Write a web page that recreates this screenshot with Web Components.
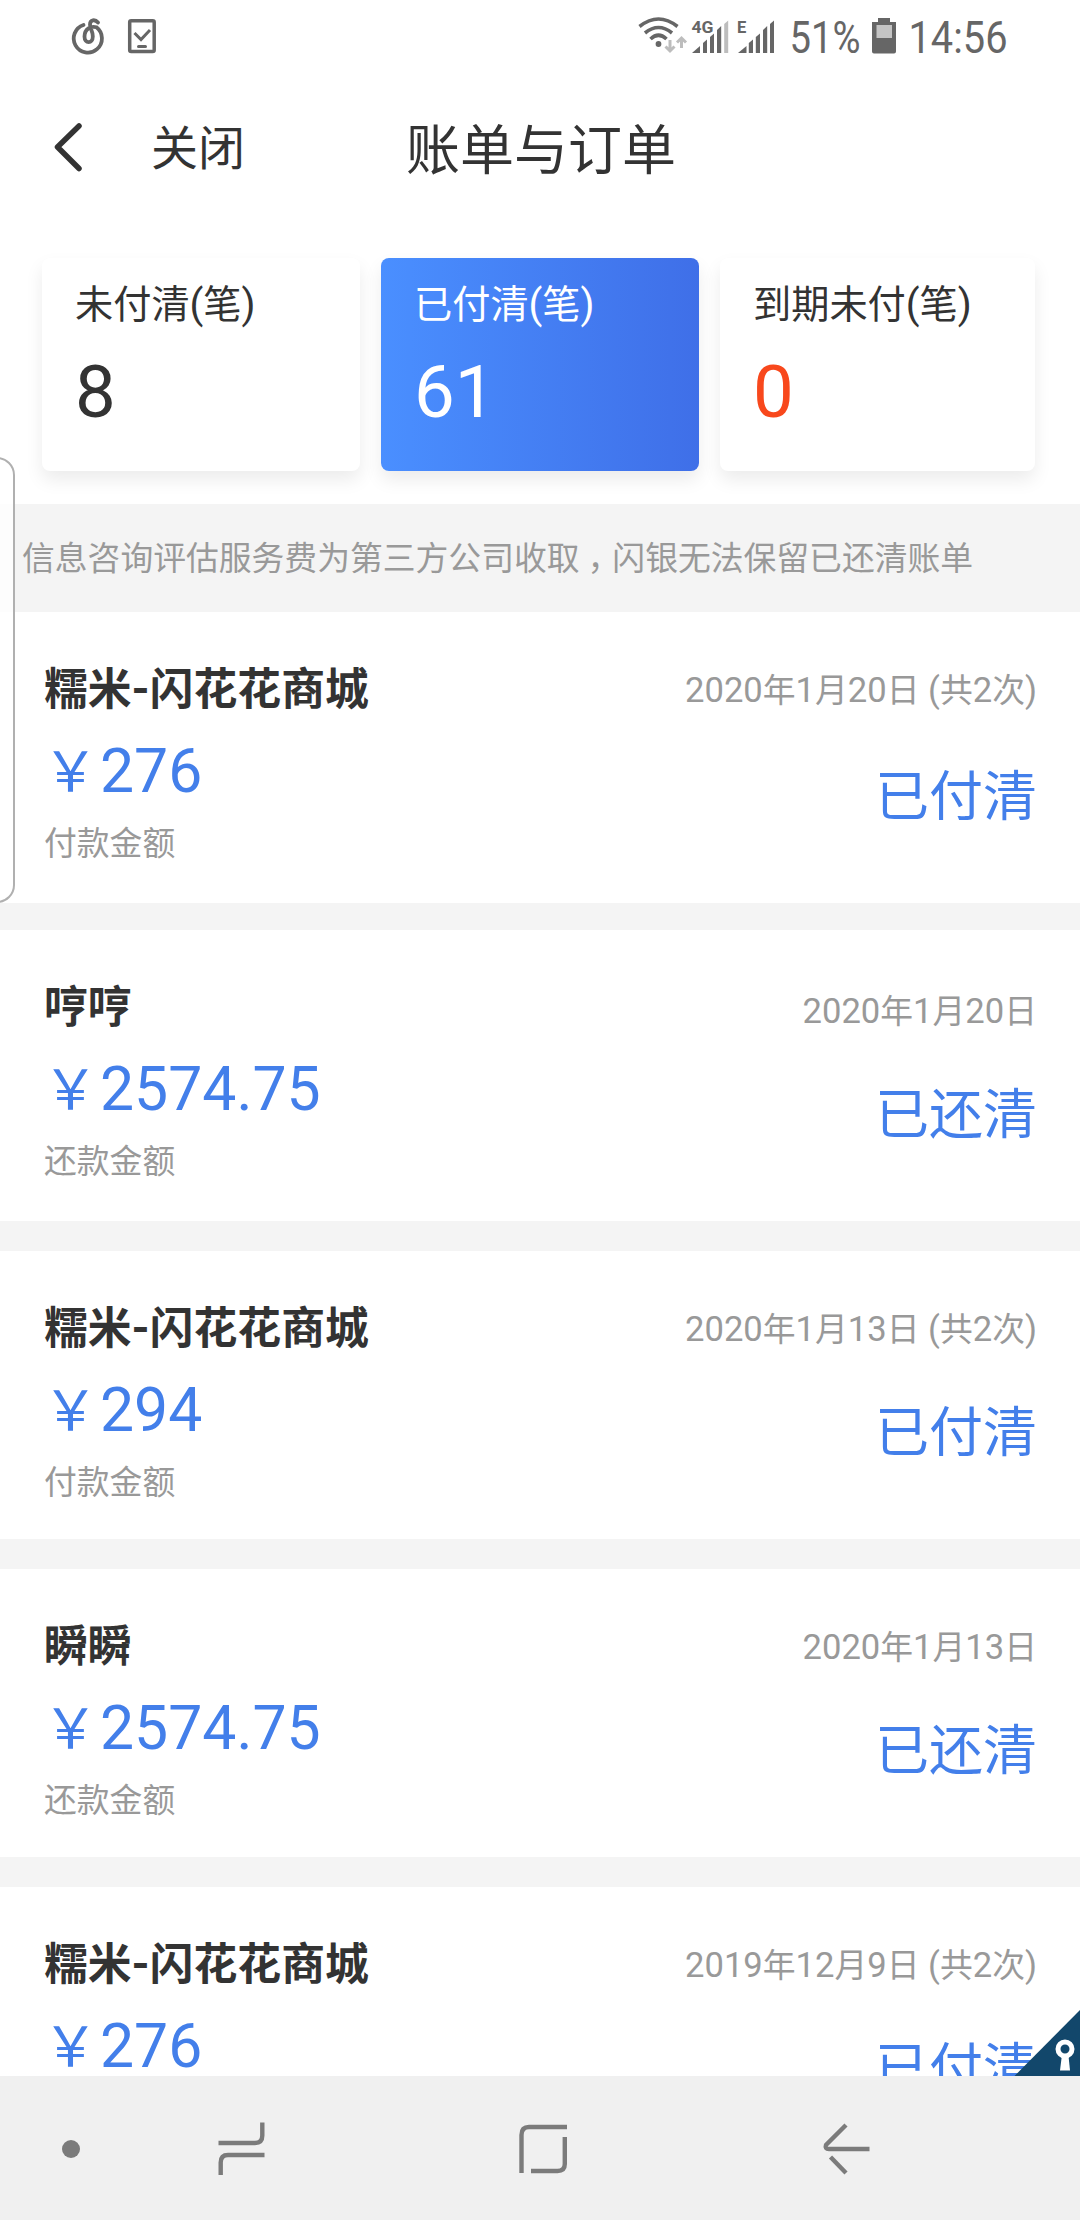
<!DOCTYPE html>
<html lang="zh-CN">
<head>
<meta charset="utf-8">
<title>账单与订单</title>
<style>
html,body{margin:0;padding:0;background:#fff}
body{width:1080px;height:2220px;overflow:hidden;font-family:Roboto,"Noto Sans CJK SC",sans-serif;color:#333}
</style>
</head>
<body>
<bill-app></bill-app>
<script>
const define=(name,html)=>customElements.define(name,class extends HTMLElement{
  connectedCallback(){
    if(this.shadowRoot)return;
    const t=document.createElement('template');
    t.innerHTML=typeof html==='function'?html(this):html;
    this.attachShadow({mode:'open'}).appendChild(t.content.cloneNode(true));
  }
});
/* Han runs are set slightly smaller than the Latin text around them. */
const mix=s=>s.replace(/[\u3000-\u9fff\uff0c]+/g,m=>`<span class="h">${m}</span>`);
const H='.h{font-size:.948em;line-height:0}';

define('status-bar',`<style>
:host{display:flex;justify-content:space-between;height:76px;padding:0 40px 0 60px;color:#666}
svg{display:block}text{font-family:Roboto,sans-serif;fill:#666}
</style>
<svg width="110" height="76" viewBox="60 0 110 76" fill="none" stroke="#666">
 <path d="M83.500 25A14.100 14.100 0 1 0 96.500 27.300C91 25.500 84.500 29 84.500 36.500C84.500 44 92.800 44 92.800 36.500C92.800 31 90 28.500 90 24.500C90 19.500 95 19 98 22.500" stroke-width="3.800" stroke-linecap="round"/>
 <rect x="129.700" y="20.700" width="24.500" height="30.800" rx="1.500" stroke-width="3.500"/>
 <path d="M134.500 33L141 39.500L150 30" stroke-width="3"/><path d="M138.500 46.500H145.500" stroke-width="3" stroke-linecap="round"/>
</svg>
<svg width="420" height="76" viewBox="620 0 420 76">
 <g fill="none" stroke="#666" stroke-width="3.600"><path d="M639.500 26.500Q658.500 11.500 677.500 26.500"/><path d="M645 33Q658.500 22 672 33"/><path d="M650.500 39Q658.500 31.500 666.500 39"/></g>
 <circle cx="658.500" cy="44" r="2.900" fill="#666"/>
 <g fill="none" stroke="#bdbdbd" stroke-width="3"><path d="M670 40V50M665.500 46.500L670 51L674.500 46.500"/><path d="M681.500 48V38.500M677 42.500L681.500 38L686 42.500"/></g>
 <g fill="#666"><path d="M692 53L700 46V53Z"/><path d="M703 53V43L707 39.500V53Z"/><path d="M710 53V37L714 33.500V53Z"/><path d="M717 53V30L721.200 26V53Z"/></g>
 <path d="M724.200 53V24L728.200 20.500V53Z" fill="#bdbdbd"/>
 <g fill="#666"><path d="M738 53L746.500 46V53Z"/><path d="M748.800 53V43L753 39.500V53Z"/><path d="M755.800 53V37L760 33.500V53Z"/><path d="M763 53V30L767.200 26V53Z"/><path d="M770 53V24L774 20.500V53Z"/></g>
 <text x="691.500" y="33" font-size="16.500" font-weight="700" textLength="22" lengthAdjust="spacingAndGlyphs" stroke="#fff" stroke-width="2" paint-order="stroke">4G</text>
 <text x="737" y="33" font-size="16.500" font-weight="700">E</text>
 <text x="789.500" y="53" font-size="45" textLength="71" lengthAdjust="spacingAndGlyphs">51%</text>
 <path d="M878 18H890V22H896V51.500Q896 53.500 894 53.500H874Q872 53.500 872 51.500V22H878Z" fill="#666"/>
 <rect x="876.500" y="25" width="15.500" height="13" fill="#c4c4c4"/>
 <text x="908.500" y="53" font-size="45" textLength="99" lengthAdjust="spacingAndGlyphs">14:56</text>
</svg>`);

define('title-bar',`<style>
:host{display:grid;grid-template-columns:151px 1fr 152px;align-items:center;box-sizing:border-box;height:144px;padding-top:7px}
svg{display:block;margin:-9px 0 0 50px}
.close{font-size:47px;line-height:68px}
.row{display:grid;grid-template-columns:255px 1fr;align-items:start;grid-column:2/4}
.t{font-size:54px;line-height:73px;white-space:nowrap}
</style>
<svg width="36" height="60" viewBox="50 117 36 60" fill="none" stroke="#333" stroke-width="5.500" stroke-linecap="round" stroke-linejoin="round"><path d="M79 126L57.500 147L79 168.500"/></svg>
<div class="row"><span class="close"><slot name="close"></slot></span><span class="t"><slot></slot></span></div>`);

define('count-card',el=>`<style>${H}
:host{display:block;box-sizing:border-box;height:213px;padding:22.500px 0 0 33px;border-radius:8px;background:#fff;box-shadow:0 9px 18px rgba(0,0,0,.08)}
:host([active]){background:linear-gradient(90deg,#4a8fff,#3f6fe8);color:#fff}
:host([alert]) .n{color:#f8481c}
.l{font-size:40.300px;line-height:48px;white-space:nowrap}.n{font-size:72.500px;line-height:80px;margin-top:24.500px}
</style><div class="l">${mix(el.getAttribute('label'))}</div><div class="n"><slot></slot></div>`);

define('count-row',`<style>
:host{display:grid;grid-template-columns:318px 318px 315px;column-gap:21px;padding:38px 45px 33px 42px}
</style><slot></slot>`);

define('notice-bar',`<style>
:host{display:block;height:108px;background:#f4f4f4;color:#999;font-size:32.800px;line-height:110px;padding-left:22px;white-space:nowrap}
.c{margin:0 -8px 0 8px}
</style>信息咨询评估服务费为第三方公司收取<span class="c">，</span>闪银无法保留已还清账单`);

define('bill-item',el=>`<style>${H}
:host{display:flex;justify-content:space-between;box-sizing:border-box;height:291px;padding:50px 43px 0 44px;background:#fff}
.t{font-size:46.200px;line-height:54px;font-weight:700}
.p{font-size:60.700px;line-height:72px;margin-top:20px;color:#437fea}.y{font-size:55px;line-height:0;margin:0 2px 0 -1px;vertical-align:1px}
.s{font-size:34.600px;line-height:40px;margin-top:14.500px;color:#999}
.r{text-align:right}.d{font-size:34.600px;line-height:54px;margin-top:var(--d,1px);color:#999}
.st{font-size:57px;line-height:60px;margin:var(--gap,47px) 0 0 0;color:#437fea}
</style>
<div><div class="t">${mix(el.getAttribute('name'))}</div><div class="p"><span class="y">￥</span>${el.getAttribute('amount')}</div>${el.hasAttribute('kind')?`<div class="s">${mix(el.getAttribute('kind'))}</div>`:''}</div>
<div class="r"><div class="d">${mix(el.getAttribute('date'))}</div><div class="st">${mix(el.getAttribute('state'))}</div></div>`);

define('bill-list',`<style>
:host{display:flex;flex-direction:column;gap:30px;background:#f4f4f4;height:1464px;overflow:hidden}
::slotted(*){flex:none}
::slotted(:first-child){margin-bottom:-3px}
::slotted(:nth-child(n+3)){height:288px!important}
</style><slot></slot>`);

define('nav-bar',`<style>:host{display:block;height:144px;background:#f0f0f0}svg{display:block}</style>
<svg width="1080" height="144" viewBox="0 2076 1080 144" fill="none" stroke="#7b7b7b" stroke-width="4.400">
<circle cx="71" cy="2149" r="9" fill="#7b7b7b" stroke="none"/>
<path d="M218.500 2143H255Q262.300 2143 262.300 2135.500V2122.500"/><path d="M264.500 2155H228Q220.700 2155 220.700 2162.500V2175"/>
<path d="M521.500 2173V2135Q521.500 2127 529 2127H567"/><path d="M564.800 2137V2164Q564.800 2171 557.500 2171H531"/>
<path d="M846 2125L826 2145Q824.500 2149 829 2149H869.500"/><path d="M830.500 2157L846 2173"/></svg>`);

define('edge-panel',`<style>:host{position:absolute;left:-22px;top:457px;width:33px;height:442px;border:2px solid #b0b0b0;border-radius:18px;background:rgba(255,255,255,.78)}</style>`);
define('corner-badge',`<style>:host{position:absolute;right:0;top:2010px;width:66px;height:66px}svg{display:block}</style>
<svg width="66" height="66" viewBox="1014 2010 66 66"><path d="M1080 2010V2076H1014.500Z" fill="#12476b"/><path d="M1061.800 2056H1068.500L1070 2070.500H1060Z" fill="#fff"/><circle cx="1065" cy="2049" r="7" fill="#12476b" stroke="#fff" stroke-width="5"/></svg>`);

define('bill-app',`<style>:host{display:block;position:relative;width:1080px;height:2220px;overflow:hidden;background:#fff}</style>
<status-bar></status-bar>
<title-bar><span slot="close">关闭</span>账单与订单</title-bar>
<count-row><count-card label="未付清(笔)">8</count-card><count-card label="已付清(笔)" active>61</count-card><count-card label="到期未付(笔)" alert>0</count-card></count-row>
<notice-bar></notice-bar>
<bill-list>
<bill-item style="--gap:50px" name="糯米-闪花花商城" amount="276" kind="付款金额" date="2020年1月20日 (共2次)" state="已付清"></bill-item>
<bill-item style="--d:4px;--gap:47px" name="哼哼" amount="2574.75" kind="还款金额" date="2020年1月20日" state="已还清"></bill-item>
<bill-item name="糯米-闪花花商城" amount="294" kind="付款金额" date="2020年1月13日 (共2次)" state="已付清"></bill-item>
<bill-item name="瞬瞬" amount="2574.75" kind="还款金额" date="2020年1月13日" state="已还清"></bill-item>
<bill-item name="糯米-闪花花商城" amount="276" date="2019年12月9日 (共2次)" state="已付清"></bill-item>
</bill-list>
<nav-bar></nav-bar>
<edge-panel></edge-panel>
<corner-badge></corner-badge>`);
</script>
</body>
</html>
